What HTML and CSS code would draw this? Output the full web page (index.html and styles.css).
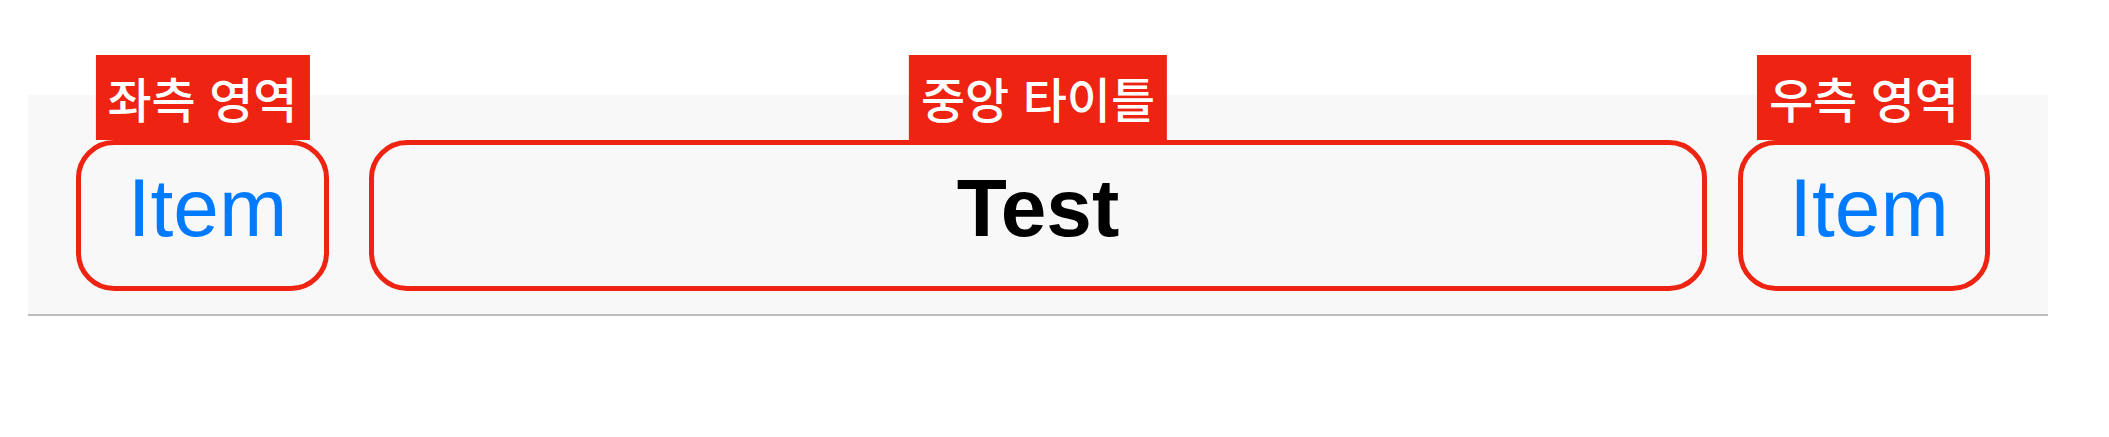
FILE: index.html
```html
<!DOCTYPE html>
<html lang="ko">
<head>
<meta charset="utf-8">
<title>Navigation bar areas</title>
<link rel="stylesheet" href="styles.css">
</head>
<body>
<div class="page">
  <div class="navbar">
    <div class="area area-left">
      <span class="tag">좌측 영역</span>
      <span class="item">Item</span>
    </div>
    <div class="area area-center">
      <span class="tag">중앙 타이틀</span>
      <span class="title">Test</span>
    </div>
    <div class="area area-right">
      <span class="tag">우측 영역</span>
      <span class="item">Item</span>
    </div>
  </div>
</div>
</body>
</html>
```

FILE: styles.css
```css
html, body {
  margin: 0;
  padding: 0;
  background: #ffffff;
}

.page {
  padding-top: 95px;
  padding-left: 28px;
  width: 2020px;
}

.navbar {
  display: flex;
  align-items: flex-start;
  background: #f8f8f8;
  border-bottom: 2px solid #bdbdbd;
  padding: 45px 58px 23px 48px;
  height: 151px;
}

.area {
  position: relative;
  box-sizing: border-box;
  height: 151px;
  border: 5px solid #ee2311;
  border-radius: 38px;
  display: flex;
  align-items: center;
  justify-content: center;
  padding-bottom: 16px;
}

.area-left {
  width: 253px;
  padding-left: 10px;
}

.area-center {
  width: 1338px;
  margin-left: 40px;
}

.area-right {
  width: 252px;
  margin-left: 31px;
  padding-left: 10px;
}

.tag {
  position: absolute;
  bottom: 100%;
  left: 50%;
  transform: translateX(-50%);
  margin-bottom: 5px;
  height: 85px;
  line-height: 85px;
  padding: 0 12px;
  background: #ee2311;
  color: #ffffff;
  font-family: "Noto Sans CJK SC", "Noto Sans CJK KR", "Noto Sans CJK JP", sans-serif;
  font-size: 48px;
  font-weight: 500;
  white-space: nowrap;
}

.item {
  font-family: "Liberation Sans", Arial, sans-serif;
  font-size: 82px;
  color: #007aff;
}

.title {
  font-family: "Liberation Sans", Arial, sans-serif;
  font-size: 82px;
  font-weight: 700;
  color: #000000;
}
```
